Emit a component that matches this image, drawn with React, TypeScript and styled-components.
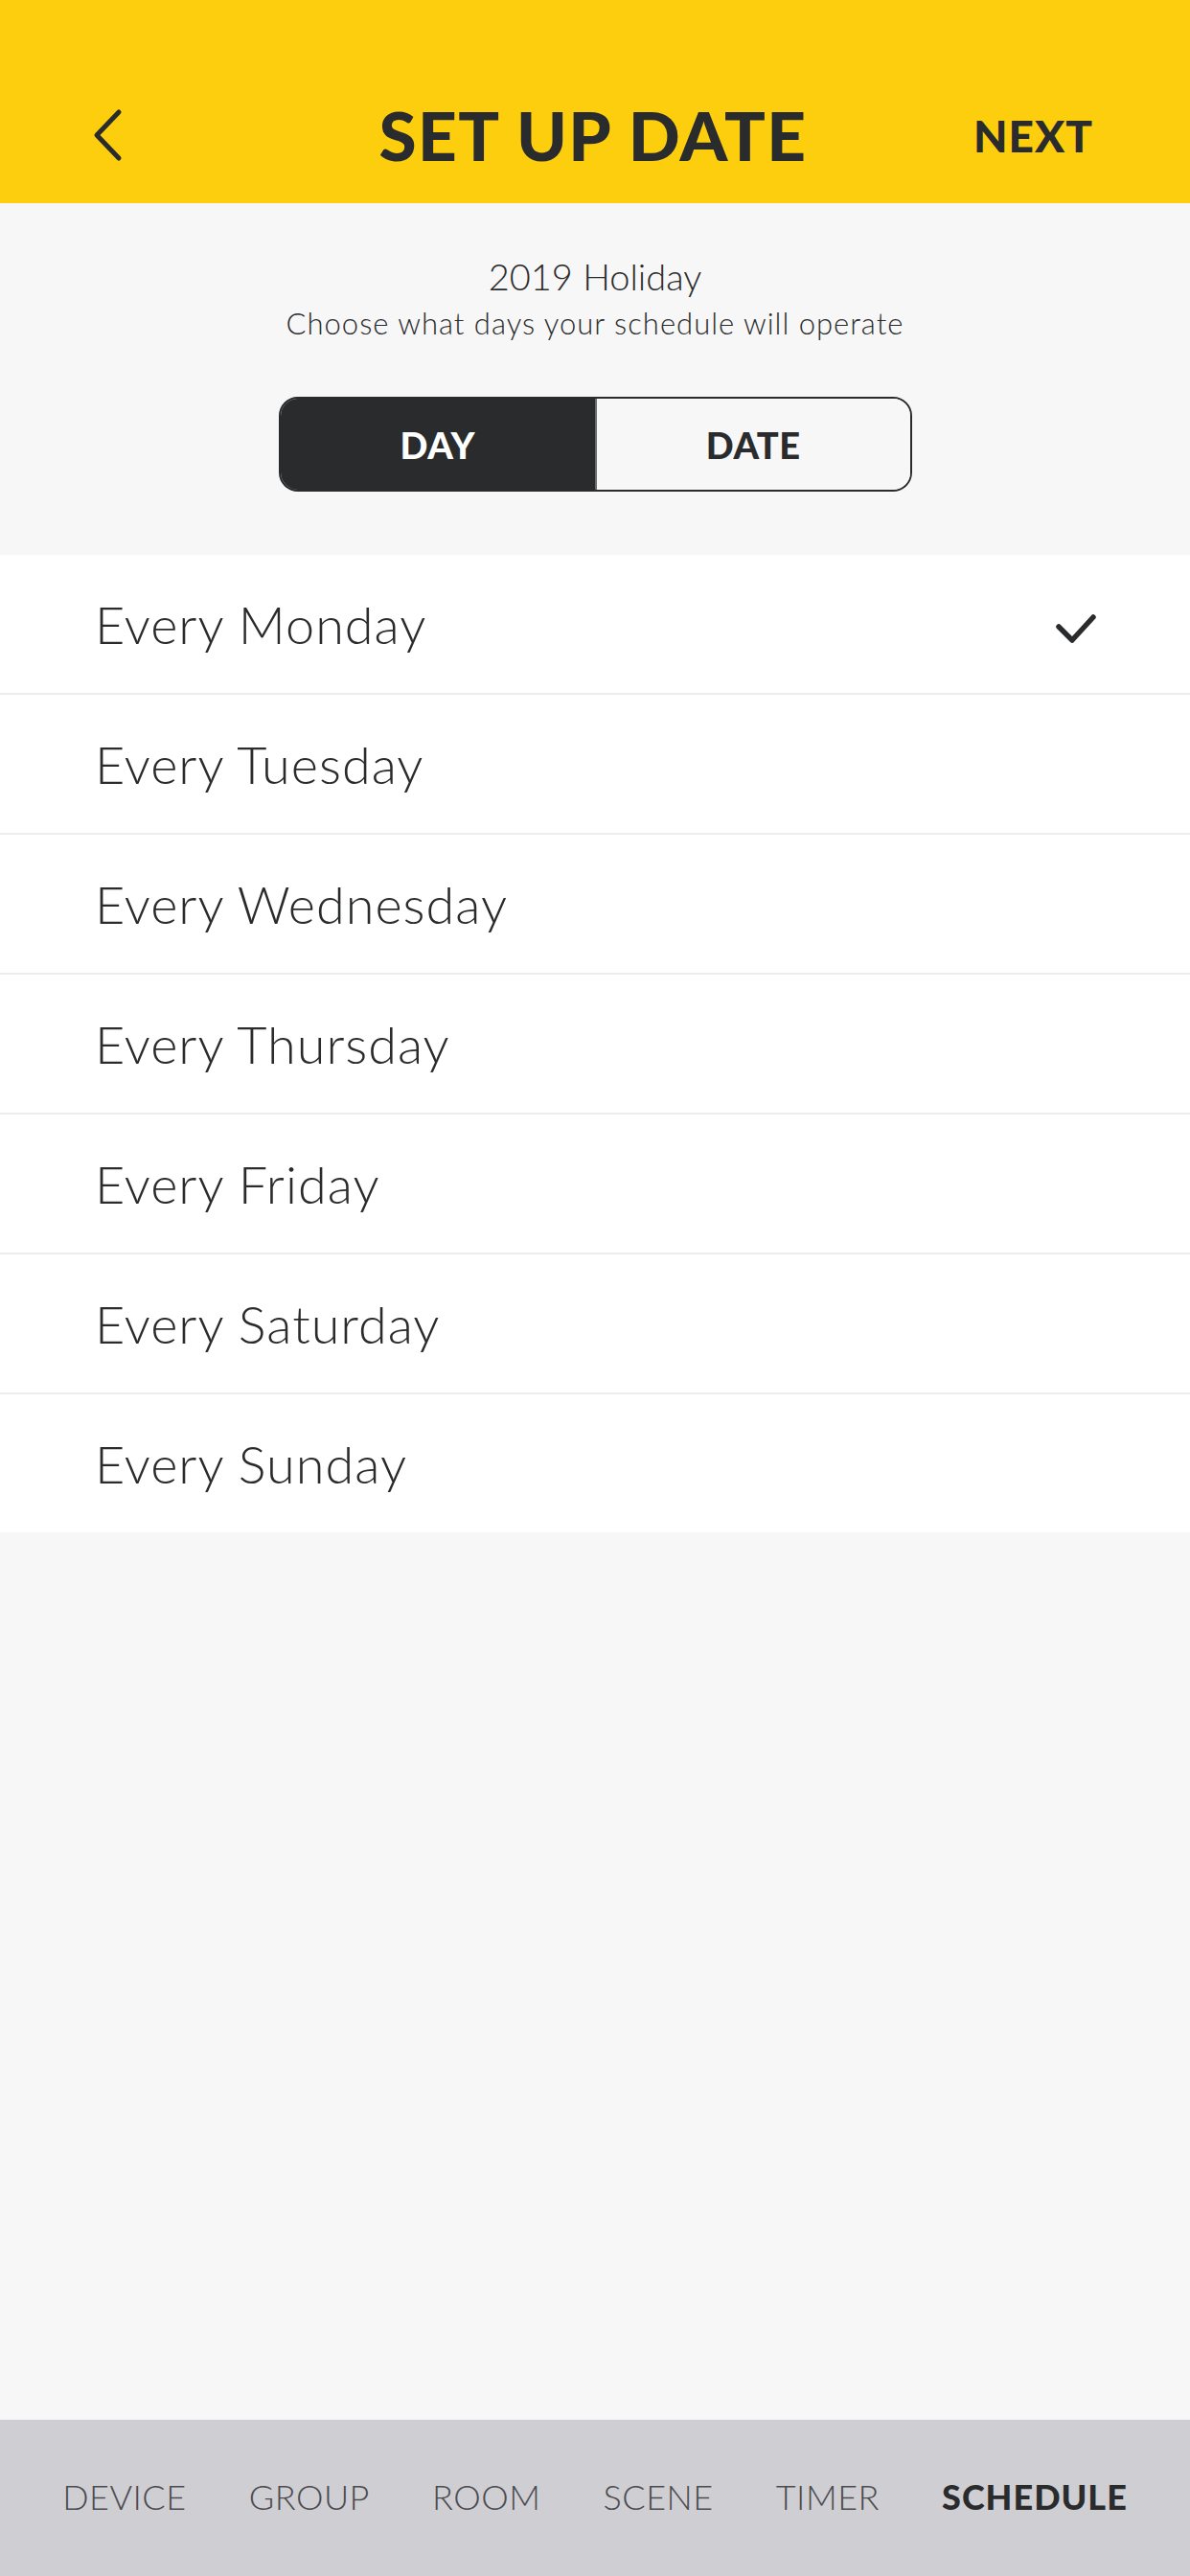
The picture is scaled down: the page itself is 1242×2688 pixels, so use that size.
import React, { useState } from "react";
import styled, { createGlobalStyle } from "styled-components";

const YELLOW = "#fcce0e";
const INK = "#2a2b2d";
const PAGE_BG = "#f7f7f7";

const GlobalStyle = createGlobalStyle`
  html, body {
    margin: 0;
    padding: 0;
    background: ${PAGE_BG};
    font-family: Lato, "Open Sans", "Liberation Sans", sans-serif;
    color: ${INK};
  }
  * {
    box-sizing: border-box;
  }
`;

const Screen = styled.div`
  display: flex;
  flex-direction: column;
  min-height: 2688px;
  width: 1242px;
  background: ${PAGE_BG};
`;

const Header = styled.header`
  height: 212px;
  background: ${YELLOW};
  padding: 70px 101px 0 97px;
  display: grid;
  grid-template-columns: 1fr auto 1fr;
  grid-template-rows: 142px;
  align-items: center;
`;

const BackButton = styled.button`
  justify-self: start;
  width: 40px;
  height: 60px;
  padding: 0;
  border: none;
  background: transparent;
  display: flex;
  align-items: center;
  cursor: pointer;
`;

const Title = styled.h1`
  margin: 0;
  font-size: 71px;
  font-weight: 900;
  letter-spacing: 1.5px;
  line-height: 142px;
`;

const NextButton = styled.button`
  justify-self: end;
  border: none;
  background: transparent;
  padding: 0;
  font-family: inherit;
  font-size: 46px;
  font-weight: 900;
  letter-spacing: 1px;
  color: ${INK};
  cursor: pointer;
`;

const Intro = styled.section`
  display: flex;
  flex-direction: column;
  align-items: center;
  padding: 53px 0 66px;
`;

const ScheduleName = styled.div`
  font-size: 38px;
  line-height: 46px;
  font-weight: 300;
`;

const Hint = styled.div`
  margin-top: 7px;
  font-size: 31px;
  line-height: 38px;
  font-weight: 300;
  letter-spacing: 1px;
`;

const Toggle = styled.div`
  margin-top: 58px;
  width: 661px;
  height: 99px;
  display: grid;
  grid-template-columns: 1fr 1fr;
  border: 2px solid ${INK};
  border-radius: 20px;
  overflow: hidden;
  background: ${PAGE_BG};
`;

const Segment = styled.button<{ active: boolean }>`
  border: none;
  border-left: ${({ active }) => (active ? "none" : "2px solid #6b6c6e")};
  padding: 0;
  font-family: inherit;
  font-size: 38px;
  font-weight: 900;
  letter-spacing: 0.5px;
  cursor: pointer;
  background: ${({ active }) => (active ? INK : PAGE_BG)};
  color: ${({ active }) => (active ? "#ffffff" : INK)};
`;

const DayList = styled.ul`
  list-style: none;
  margin: 0;
  padding: 0;
  background: #ffffff;
`;

const DayRow = styled.li`
  height: 146px;
  padding: 0 97px 0 99px;
  display: flex;
  align-items: center;
  justify-content: space-between;
  border-bottom: 2px solid #ececec;
  font-size: 54px;
  font-weight: 300;
  letter-spacing: 1px;
  cursor: pointer;

  &:last-child {
    height: 144px;
    border-bottom: none;
  }
`;

const CheckIcon = styled.svg`
  margin-top: 10px;
  flex-shrink: 0;
`;

const TabBar = styled.nav`
  margin-top: auto;
  height: 163px;
  background: #cfced3;
  display: flex;
  align-items: center;
  justify-content: space-evenly;
  padding-bottom: 4px;
`;

const Tab = styled.span<{ active?: boolean }>`
  font-size: 36px;
  font-weight: ${({ active }) => (active ? 900 : 300)};
  letter-spacing: ${({ active }) => (active ? "1px" : "0.5px")};
  color: ${({ active }) => (active ? INK : "#4b4b50")};
`;

const ChevronLeft = () => (
  <svg width="32" height="56" viewBox="0 0 32 56" fill="none">
    <path d="M27 4 L4 28 L27 52" stroke={INK} strokeWidth="5" strokeLinecap="round" strokeLinejoin="round" />
  </svg>
);

const Check = () => (
  <CheckIcon width="44" height="36" viewBox="0 0 44 36" fill="none">
    <path d="M4 16 L18 30 L40 6" stroke={INK} strokeWidth="5.5" strokeLinecap="round" strokeLinejoin="round" />
  </CheckIcon>
);

const days = ["Monday", "Tuesday", "Wednesday", "Thursday", "Friday", "Saturday", "Sunday"];
const tabs = ["DEVICE", "GROUP", "ROOM", "SCENE", "TIMER", "SCHEDULE"];

export default function App() {
  const [mode, setMode] = useState<"day" | "date">("day");
  const [selected, setSelected] = useState("Monday");

  return (
    <Screen>
      <GlobalStyle />
      <Header>
        <BackButton aria-label="Back">
          <ChevronLeft />
        </BackButton>
        <Title>SET UP DATE</Title>
        <NextButton>NEXT</NextButton>
      </Header>

      <Intro>
        <ScheduleName>2019 Holiday</ScheduleName>
        <Hint>Choose what days your schedule will operate</Hint>
        <Toggle>
          <Segment active={mode === "day"} onClick={() => setMode("day")}>
            DAY
          </Segment>
          <Segment active={mode === "date"} onClick={() => setMode("date")}>
            DATE
          </Segment>
        </Toggle>
      </Intro>

      <DayList>
        {days.map((day) => (
          <DayRow key={day} onClick={() => setSelected(day)}>
            <span>Every {day}</span>
            {selected === day && <Check />}
          </DayRow>
        ))}
      </DayList>

      <TabBar>
        {tabs.map((tab) => (
          <Tab key={tab} active={tab === "SCHEDULE"}>
            {tab}
          </Tab>
        ))}
      </TabBar>
    </Screen>
  );
}
